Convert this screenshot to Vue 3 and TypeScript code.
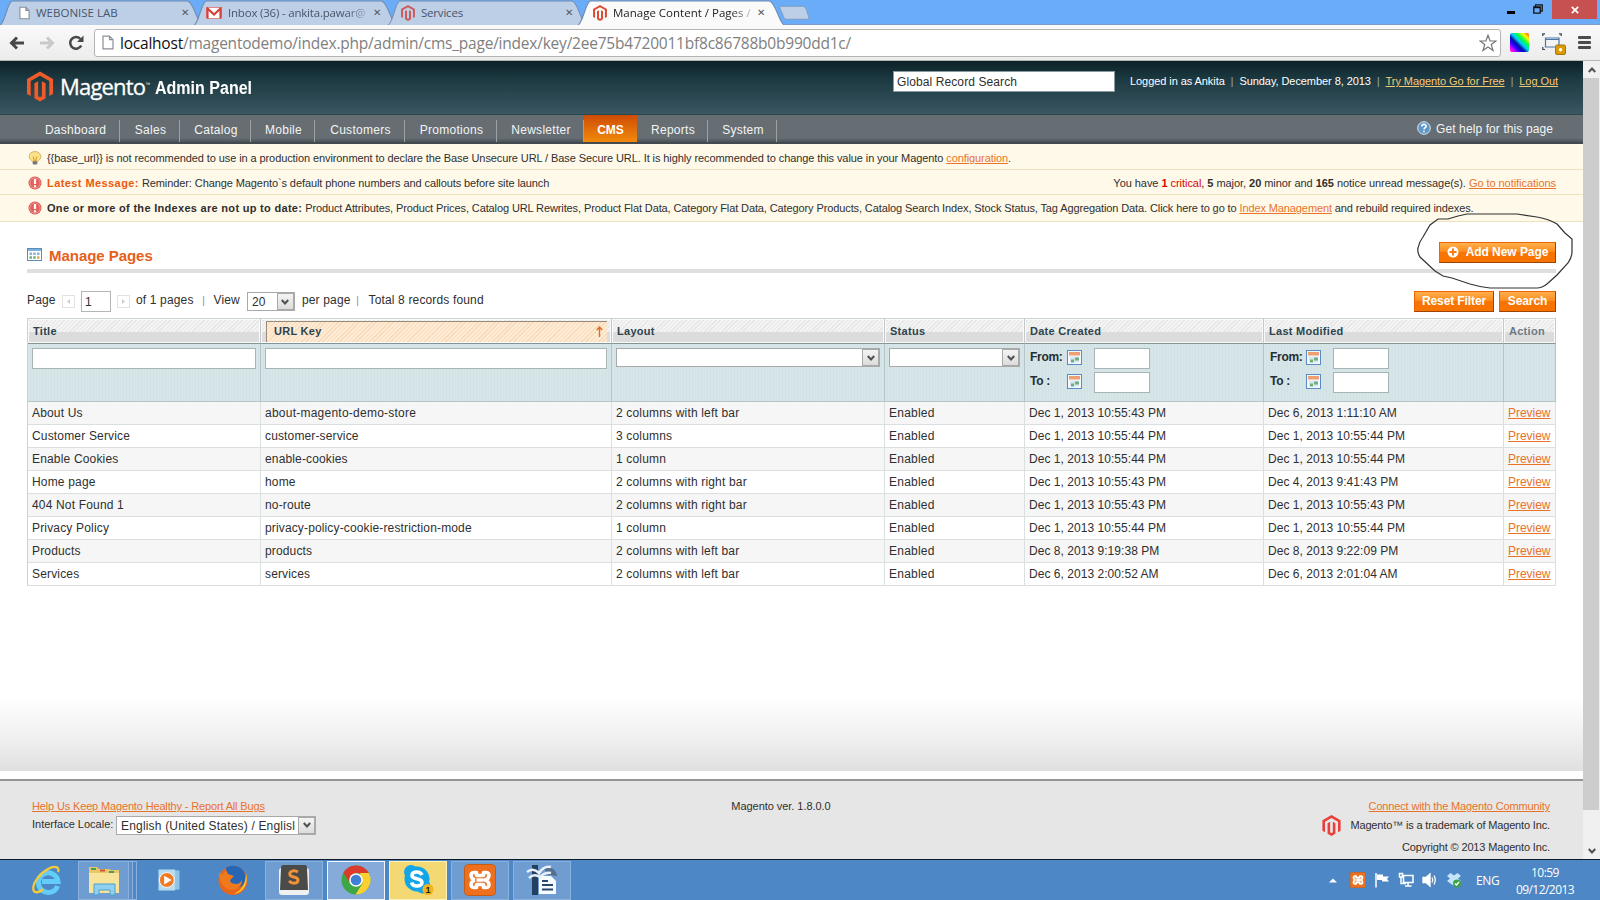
<script setup lang="ts">
interface PageRow {
  title: string
  key: string
  layout: string
  created: string
  modified: string
}

const nav: { label: string; size: string }[] = [
  { label: 'Dashboard', size: 'n90' },
  { label: 'Sales', size: 'n60' },
  { label: 'Catalog', size: 'n71' },
  { label: 'Mobile', size: 'n64' },
  { label: 'Customers', size: 'n90' },
  { label: 'Promotions', size: 'n92' },
  { label: 'Newsletter', size: 'n87' },
  { label: 'CMS', size: 'n53' },
  { label: 'Reports', size: 'n71' },
  { label: 'System', size: 'n69' },
]

const rows: PageRow[] = [
  { title: 'About Us', key: 'about-magento-demo-store', layout: '2 columns with left bar', created: 'Dec 1, 2013 10:55:43 PM', modified: 'Dec 6, 2013 1:11:10 AM' },
  { title: 'Customer Service', key: 'customer-service', layout: '3 columns', created: 'Dec 1, 2013 10:55:44 PM', modified: 'Dec 1, 2013 10:55:44 PM' },
  { title: 'Enable Cookies', key: 'enable-cookies', layout: '1 column', created: 'Dec 1, 2013 10:55:44 PM', modified: 'Dec 1, 2013 10:55:44 PM' },
  { title: 'Home page', key: 'home', layout: '2 columns with right bar', created: 'Dec 1, 2013 10:55:43 PM', modified: 'Dec 4, 2013 9:41:43 PM' },
  { title: '404 Not Found 1', key: 'no-route', layout: '2 columns with right bar', created: 'Dec 1, 2013 10:55:43 PM', modified: 'Dec 1, 2013 10:55:43 PM' },
  { title: 'Privacy Policy', key: 'privacy-policy-cookie-restriction-mode', layout: '1 column', created: 'Dec 1, 2013 10:55:44 PM', modified: 'Dec 1, 2013 10:55:44 PM' },
  { title: 'Products', key: 'products', layout: '2 columns with left bar', created: 'Dec 8, 2013 9:19:38 PM', modified: 'Dec 8, 2013 9:22:09 PM' },
  { title: 'Services', key: 'services', layout: '2 columns with left bar', created: 'Dec 6, 2013 2:00:52 AM', modified: 'Dec 6, 2013 2:01:04 AM' },
]
</script>

<template>
  <div class="screen">
    <div class="tabstrip">
      <div class="tab t1">
        <svg class="tabshape" viewBox="0 0 200 25" preserveAspectRatio="none"><path d="M0 25C5 23 7 3 12 1H186C192 3 195 22 200 25" /></svg>
        <svg class="doc" viewBox="0 0 12 14"><path d="M1 .7h6.500L11 4.200v9.100H1zM7.500.7v3.500H11" /></svg>
        <span class="tabtext">WEBONISE LAB</span><i class="x">✕</i>
      </div>
      <div class="tab t2">
        <svg class="tabshape" viewBox="0 0 200 25" preserveAspectRatio="none"><path d="M0 25C5 23 7 3 12 1H186C192 3 195 22 200 25" /></svg>
        <svg class="mail" viewBox="0 0 16 12"><rect x=".5" y=".5" width="15" height="11" rx="1" /><path d="M1.500 11.500V1.500L8 7.500L14.500 1.500V11.500" /></svg>
        <span class="tabtext fade">Inbox (36) - ankita.pawar@</span><i class="x">✕</i>
      </div>
      <div class="tab t3">
        <svg class="tabshape" viewBox="0 0 200 25" preserveAspectRatio="none"><path d="M0 25C5 23 7 3 12 1H186C192 3 195 22 200 25" /></svg>
        <svg class="mag small pale" viewBox="0 0 26 30"><path d="M13 0L26 7.500V22.500L22.300 24.600V9.600L13 4.300L3.700 9.600V24.600L0 22.500V7.500ZM7.400 11.800L11.100 9.700V24.700L13 25.800L14.900 24.700V9.700L18.600 11.800V26.800L13 30L7.400 26.800Z" /></svg>
        <span class="tabtext">Services</span><i class="x">✕</i>
      </div>
      <div class="tab t4">
        <svg class="tabshape" viewBox="0 0 200 25" preserveAspectRatio="none"><path d="M0 25C5 23 7 3 12 1H186C192 3 195 22 200 25" /></svg>
        <svg class="mag small" viewBox="0 0 26 30"><path d="M13 0L26 7.500V22.500L22.300 24.600V9.600L13 4.300L3.700 9.600V24.600L0 22.500V7.500ZM7.400 11.800L11.100 9.700V24.700L13 25.800L14.900 24.700V9.700L18.600 11.800V26.800L13 30L7.400 26.800Z" /></svg>
        <span class="tabtext fade">Manage Content / Pages /</span><i class="x">✕</i>
      </div>
      <svg class="newtab" viewBox="0 0 32 16"><path d="M2 1H24C27 1 28 3 29 7L31 13C31 14 30 14.500 29 14.500H8C6 14.500 5 13 4 10L1 3C.8 2 1 1 2 1Z" /></svg>
      <div class="winbtns">
        <svg class="min" viewBox="0 0 8 3"><rect width="8" height="3" /></svg>
        <svg class="restore" viewBox="0 0 10 10"><path d="M.8 3h6.400v6.200H.8zM2.500 3V.8h6.700v6.400H7.200M.8 3.500h6.400" /></svg>
        <div class="close"><svg viewBox="0 0 8 8"><path d="M.8.8l6.400 6.400M7.200.8L.8 7.200" /></svg></div>
      </div>
    </div>

    <div class="toolbar">
      <svg class="arrow" viewBox="0 0 16 14"><path d="M15 7H3M8 1.500L2.500 7L8 12.500" /></svg>
      <svg class="arrow off" viewBox="0 0 16 14"><path d="M1 7H13M8 1.500L13.500 7L8 12.500" /></svg>
      <svg class="reload" viewBox="0 0 16 16"><path class="ring" d="M13.200 10.500A5.800 5.800 0 1 1 12.300 4" /><path class="tip" d="M15.500 .5V7H9Z" /></svg>
      <div class="omnibox">
        <svg class="doc" viewBox="0 0 12 14"><path d="M1 .7h6.500L11 4.200v9.100H1zM7.500.7v3.500H11" /></svg>
        <span class="url"><b>localhost</b>/magentodemo/index.php/admin/cms_page/index/key/2ee75b4720011bf8c86788b0b990dd1c/</span>
        <svg class="star" viewBox="0 0 18 18"><path d="M9 1.200L11.100 7H17L12.300 10.500L14 16.500L9 13L4 16.500L5.700 10.500L1 7H6.900Z" /></svg>
      </div>
      <div class="rainbow"></div>
      <svg class="cap" viewBox="0 0 24 22"><path class="frm" d="M3.500 5H17V14H3.500ZM3.500 6.500H17" /><path class="co" d="M.8 3V.8H3M17 .8H19.200V3M.8 14V16.500H3" /><rect class="gold" x="13.500" y="12" width="10" height="9.500" rx="1.500" /><circle cx="18.500" cy="16.700" r="1.700" /></svg>
      <div class="menu"><i></i><i></i><i></i></div>
    </div>

    <div class="viewport">
      <div class="page">
        <header class="head">
          <svg class="mag big" viewBox="0 0 26 30"><path d="M13 0L26 7.500V22.500L22.300 24.600V9.600L13 4.300L3.700 9.600V24.600L0 22.500V7.500ZM7.400 11.800L11.100 9.700V24.700L13 25.800L14.900 24.700V9.700L18.600 11.800V26.800L13 30L7.400 26.800Z" /></svg>
          <span class="brand">Magento</span><sup class="tm">™</sup><span class="panel">Admin Panel</span>
          <div class="gsearch"><span>Global Record Search</span></div>
          <div class="super">
            <span>Logged in as Ankita</span><i>|</i><span>Sunday, December 8, 2013</span><i>|</i><a>Try Magento Go for Free</a><i>|</i><a>Log Out</a>
          </div>
        </header>

        <nav class="nav">
          <div v-for="n in nav" :key="n.label" class="ni" :class="[n.size, { on: n.label === 'CMS' }]"><span>{{ n.label }}</span></div>
          <div class="help">
            <svg viewBox="0 0 14 14"><circle cx="7" cy="7" r="6.300" /><path d="M4.800 5.500C4.800 2.700 9.200 2.800 9.200 5.300C9.200 6.700 7 6.800 7 8.500M7 9.700V11.200" /></svg>
            <span>Get help for this page</span>
          </div>
        </nav>

        <div class="notice a">
          <svg class="bulb" viewBox="0 0 14 15"><path class="gl" d="M7 .6C3.200 .6 .7 3 .7 6C.7 8.300 2.500 9.500 4 11H10C11.500 9.500 13.300 8.300 13.300 6C13.300 3 10.800 .6 7 .6Z" /><path class="fi" d="M5 6L6 9.500V11H8V9.500L9 6" /><rect x="4.500" y="11" width="5" height="3.500" rx="1" /></svg>
          <span class="s1">&#123;&#123;base_url&#125;&#125; is not recommended to use in a production environment to declare the Base Unsecure URL / Base Secure URL. It is highly recommended to change this value in your Magento <a>configuration</a>.</span>
        </div>
        <div class="notice b">
          <svg class="err" viewBox="0 0 14 14"><circle cx="7" cy="7" r="6.500" /><circle class="in" cx="7" cy="7" r="5.200" /><path d="M7 3V8M7 9.300V11.200" /></svg>
          <b class="lm">Latest Message:</b><span class="s2">Reminder: Change Magento`s default phone numbers and callouts before site launch</span>
          <span class="unread">You have <span class="crit"><b>1</b> critical</span>, <b>5</b> major, <b>20</b> minor and <b>165</b> notice unread message(s). <a>Go to notifications</a></span>
        </div>
        <div class="notice c">
          <svg class="err" viewBox="0 0 14 14"><circle cx="7" cy="7" r="6.500" /><circle class="in" cx="7" cy="7" r="5.200" /><path d="M7 3V8M7 9.300V11.200" /></svg>
          <span class="s3"><b>One or more of the Indexes are not up to date:</b> Product Attributes, Product Prices, Catalog URL Rewrites, Product Flat Data, Category Flat Data, Category Products, Catalog Search Index, Stock Status, Tag Aggregation Data. Click here to go to <a>Index Management</a> and rebuild required indexes.</span>
        </div>

        <main class="main">
          <div class="titlebar">
            <svg class="grid" viewBox="0 0 15 13"><rect class="bx" x=".5" y=".5" width="14" height="12" /><rect class="tp" x="1" y="1" width="13" height="2" /><path class="q1" d="M2.500 4.500h2.500v2.500h-2.500zM6.200 4.500h2.500v2.500h-2.500zM10 4.500h2.500v2.500h-2.500z" /><path class="q2" d="M2.500 8.300h2.500v2.500h-2.500zM6.200 8.300h2.500v2.500h-2.500z" /><path class="q3" d="M10 8.300h2.500v2.500h-2.500z" /></svg>
            <h3>Manage Pages</h3>
            <button class="btn add"><svg viewBox="0 0 12 12"><circle cx="6" cy="6" r="5.500" /><path d="M6 2.500V9.500M2.500 6H9.500" /></svg><span>Add New Page</span></button>
          </div>

          <div class="pager">
            <span class="w35">Page</span>
            <svg class="pg" viewBox="0 0 13 13"><rect x=".5" y=".5" width="12" height="12" /><path d="M8 4V9L5 6.500Z" /></svg>
            <div class="num">1</div>
            <svg class="pg" viewBox="0 0 13 13"><rect x=".5" y=".5" width="12" height="12" /><path d="M5 4V9L8 6.500Z" /></svg>
            <span class="of">of 1 pages</span><i>|</i><span class="view">View</span>
            <div class="sel sv"><span>20</span><em><svg viewBox="0 0 8 6"><path d="M.8 1L4 4.500L7.200 1" /></svg></em></div>
            <span class="per">per page</span><i class="last">|</i><span class="tot">Total 8 records found</span>
            <button class="btn reset"><span>Reset Filter</span></button>
            <button class="btn search"><span>Search</span></button>
          </div>

          <table>
            <colgroup><col class="c1" /><col class="c2" /><col class="c3" /><col class="c4" /><col class="c5" /><col class="c6" /><col class="c7" /></colgroup>
            <thead>
              <tr class="hd">
                <th>Title</th>
                <th class="sorted"><div><span>URL Key</span><svg viewBox="0 0 7 11"><path d="M3.500 11V1.500M.8 4L3.500 1L6.200 4" /></svg></div></th>
                <th>Layout</th><th>Status</th><th>Date Created</th><th>Last Modified</th><th class="action">Action</th>
              </tr>
              <tr class="flt">
                <td><div class="inp"></div></td>
                <td><div class="inp"></div></td>
                <td><div class="sel"><span></span><em><svg viewBox="0 0 8 6"><path d="M.8 1L4 4.500L7.200 1" /></svg></em></div></td>
                <td><div class="sel"><span></span><em><svg viewBox="0 0 8 6"><path d="M.8 1L4 4.500L7.200 1" /></svg></em></div></td>
                <td v-for="d in 2" :key="d">
                  <div v-for="l in ['From:', 'To :']" :key="l" class="range" :class="{ second: d === 2 }">
                    <label>{{ l }}</label>
                    <svg class="cal" viewBox="0 0 15 15"><rect class="bx" x=".5" y=".5" width="14" height="14" /><rect class="tp" x="2" y="2" width="11" height="3.500" /><path class="gy" d="M3 6.500h9v6H3z" /><path class="gr" d="M4 9.500h3v3H4zM8 7.500h4v3H8z" /></svg>
                    <div class="inp date"></div>
                  </div>
                </td>
                <td></td>
              </tr>
            </thead>
            <tbody>
              <tr v-for="r in rows" :key="r.title">
                <td>{{ r.title }}</td><td class="key">{{ r.key }}</td><td>{{ r.layout }}</td><td class="key">Enabled</td><td class="dt">{{ r.created }}</td><td class="dt">{{ r.modified }}</td><td class="pv"><a>Preview</a></td>
              </tr>
            </tbody>
          </table>
        </main>

        <footer class="foot">
          <div class="fl">
            <a>Help Us Keep Magento Healthy - Report All Bugs</a>
            <div class="loc"><span>Interface Locale:</span><div class="sel"><span>English (United States) / Englisl</span><em><svg viewBox="0 0 8 6"><path d="M.8 1L4 4.500L7.200 1" /></svg></em></div></div>
          </div>
          <div class="fc">Magento ver. 1.8.0.0</div>
          <div class="fr">
            <a>Connect with the Magento Community</a>
            <div class="tmk"><svg class="mag red" viewBox="0 0 26 30"><path d="M13 0L26 7.500V22.500L22.300 24.600V9.600L13 4.300L3.700 9.600V24.600L0 22.500V7.500ZM7.400 11.800L11.100 9.700V24.700L13 25.800L14.900 24.700V9.700L18.600 11.800V26.800L13 30L7.400 26.800Z" /></svg><span>Magento™ is a trademark of Magento Inc.</span></div>
            <div class="copy">Copyright © 2013 Magento Inc.</div>
          </div>
        </footer>
      </div>
      <div class="scroll">
        <div class="sb"><svg viewBox="0 0 8 6"><path d="M.8 5L4 1.500L7.200 5" /></svg></div>
        <div class="thumb"></div>
        <div class="sb"><svg viewBox="0 0 8 6"><path d="M.8 1L4 4.500L7.200 1" /></svg></div>
      </div>
    </div>

    <svg class="scribble" viewBox="0 0 160 80"><path d="M52 4L102 4L122 7Q134 9 142 14L150 23L157 29V42Q157 47 153 53L142 65L132 74Q127 78 122 78H75Q65 77 55 74L37 68L28 66L20 61L5 47Q2 42 3 38Q4 32 8 27L15 15L23 9H33L43 6Z" /></svg>

    <div class="taskbar">
      <svg class="ic ie" viewBox="0 0 32 32"><path class="e" d="M26.500 22A9.800 9.800 0 1 1 27 17.500H11" /><path class="sw" d="M27 8C29 3 24 1 17 5C8 10 1 20 2.500 26C3.500 30 9 28 12 25.500" /></svg>
      <div class="tb stack"><svg class="ic" viewBox="0 0 32 32"><path class="f1" d="M1 3H9L11 5H21L23 6H31V28H1Z" /><path class="f2" d="M1 9H31V29H1Z" /><path class="f3" d="M3 5h5M21 8h5" /><path class="f5" d="M12 6.500h5" /><path class="f4" d="M6 31V20H27V31H22V26H11V31Z" /></svg></div>
      <svg class="ic wmp" viewBox="0 0 32 32"><path class="p1" d="M9 5H28V27H9Z" /><path class="p2" d="M4 4H23V28H4Z" /><circle cx="13.500" cy="16" r="8.500" /><path class="tri" d="M10.500 11V21L19 16Z" /></svg>
      <svg class="ic ff" viewBox="0 0 32 32"><circle class="o" cx="16" cy="16.500" r="14.500" /><path class="bl" d="M9 4C16-1 28 3 28.500 13C29 21 24 24 19 23C12 22 9 17 9 12Z" /><path class="or" d="M2 8L5 11L9 6L11 10L17 12L14 15C12 17 14 20 19 20C22 20 24 18 25 16C25 23 18 28 11 25C4 22 2 15 2 8Z" /><path class="ye" d="M29 9C32 20 26 29 17 30C25 26 29 19 29 9Z" /></svg>
      <div class="tb sub"><svg class="ic" viewBox="0 0 32 32"><rect class="w" x="1" y="4" width="30" height="27" rx="3" /><path class="k" d="M5 1H27Q29 1 29 4L30 26H2L3 4Q3 1 5 1Z" /><path class="s" d="M20 8C15 5 11 8 12 11C13 14 20 12 20 16C20 20 14 20 11 17" /></svg></div>
      <div class="tb act"><svg class="ic" viewBox="0 0 32 32"><circle class="g" cx="16" cy="16" r="14.500" /><path class="r" d="M3.500 8.700A14.500 14.500 0 0 1 28.700 9H16L10 19Z" /><path class="y" d="M28.700 9A14.500 14.500 0 0 1 15.500 30.500L22.500 19.500L20 9Z" /><circle class="w" cx="16" cy="16" r="6.800" /><circle class="b" cx="16" cy="16" r="5.300" /></svg></div>
      <div class="tb sky"><svg class="ic" viewBox="0 0 32 32"><circle class="cl" cx="15" cy="15" r="12.500" /><circle class="cl" cx="9" cy="8" r="7" /><circle class="cl" cx="21" cy="22" r="7.500" /><path class="s" d="M20 11C18 7 10 7 10 11.500C10 16 20 13.500 20 18.500C20 23 11 23.500 9.500 18.500" /><circle class="n" cx="26" cy="25.500" r="5.500" /><text x="23.500" y="29">1</text></svg></div>
      <div class="tb"><svg class="ic xa" viewBox="0 0 32 32"><rect x=".5" y=".5" width="31" height="31" rx="4" /><path d="M12.500 16H19.500M11 16C6 14.500 6 8.500 9.500 8.500H12.500V11.500H19.500V8.500H22.500C26 8.500 26 14.500 21 16C26 17.500 26 23.500 22.500 23.500H19.500V20.500H12.500V23.500H9.500C6 23.500 6 17.500 11 16" /></svg></div>
      <div class="tb"><svg class="ic wr" viewBox="0 0 32 32"><path class="d" d="M6 1H12V31H6Z" /><path class="dg" d="M17 3C24 2 30 5 31 12L22 11Z" /><path class="pg2" d="M13 12H25L30 17V30H13Z" /><path class="ln" d="M16 17H22M16 21H27M16 25.500H27" /><path class="gu" d="M1 8C6 4 10 6 13 9C17 3 21 2 25 3M3 14C7 10 11 11 14 13C17 10 21 8 25 9" /></svg></div>
      <div class="tray">
        <svg class="up" viewBox="0 0 8 5"><path d="M0 4.500L4 .5L8 4.500Z" /></svg>
        <svg class="xa" viewBox="0 0 32 32"><rect x=".5" y=".5" width="31" height="31" rx="3" /><path d="M12.500 16H19.500M11 16C6 14.500 6 8.500 9.500 8.500H12.500V11.500H19.500V8.500H22.500C26 8.500 26 14.500 21 16C26 17.500 26 23.500 22.500 23.500H19.500V20.500H12.500V23.500H9.500C6 23.500 6 17.500 11 16" /></svg>
        <svg class="flag" viewBox="0 0 16 16"><path class="st" d="M2 1V15.500" /><path d="M3 2.500H9V4.500H15L13 7L15 9.500H8V8H3Z" /></svg>
        <svg class="net" viewBox="0 0 16 16"><path d="M5.500 3.500H15V10.500H5.500ZM10 10.500V13.500M7 14H13.500M1.500 1.500H4.500V5H1.500ZM3 5V11.500H8" /></svg>
        <svg class="vol" viewBox="0 0 16 16"><path class="sp" d="M1 5.500H4L8 2V14L4 10.500H1Z" /><path d="M10 5.500Q11.500 8 10 10.500M12 3.500Q14.500 8 12 12.500" /></svg>
        <svg class="drop" viewBox="0 0 16 16"><path d="M4.500 1L8 3.500L11.500 1L15 4L12 6.500L15 9L11.500 11.500L8 14L4.500 11.500L1 9L4 6.500L1 4Z" /><circle cx="11" cy="11.500" r="4" /><path class="ck" d="M9 11.500L10.500 13L13 10" /></svg>
        <span class="lang">ENG</span>
        <div class="clock"><span>10:59</span><span>09/12/2013</span></div>
      </div>
    </div>
  </div>
</template>

<style>
html,
body {
  margin: 0;
  overflow: hidden;
}
</style>

<style scoped>
* {
  box-sizing: border-box;
}
.screen {
  position: relative;
  width: 1600px;
  height: 900px;
  display: flex;
  flex-direction: column;
  overflow: hidden;
  font-family: 'Liberation Sans', Arial, sans-serif;
  font-size: 12px;
  color: #2f2f2f;
  background: #fff;
  white-space: nowrap;
}
svg {
  display: block;
  flex: none;
}
i {
  font-style: normal;
}
a {
  color: #e8732a;
  text-decoration: underline;
}
/* browser frame */
.tabstrip {
  height: 25px;
  flex: none;
  display: flex;
  background: #6aacf7;
  border-bottom: 1px solid #7d9cc8;
  font-family: 'Open Sans', 'Noto Sans', sans-serif;
}
.tab {
  position: relative;
  height: 25px;
  display: flex;
  align-items: center;
  margin-right: -8px;
  color: #4a5568;
}
.tabshape {
  position: absolute;
  inset: 0;
  width: 100%;
  height: 25px;
  fill: #bccfe6;
  stroke: #7189ad;
  stroke-width: 1;
}
.t1 { width: 202px; padding-left: 19px; }
.t2 { width: 202px; padding-left: 12px; }
.t3 { width: 198px; padding-left: 13px; }
.t4 { width: 206px; padding-left: 15px; color: #222; z-index: 1; }
.t4 .tabshape { fill: #fafafa; }
.tab > svg:not(.tabshape),
.tabtext,
.x { position: relative; }
.tabtext {
  font-size: 11.500px;
  line-height: 20px;
  margin-left: 6px;
  flex: 1;
  overflow: hidden;
}
.t2 .tabtext,
.t3 .tabtext { letter-spacing: -.2px; }
.fade {
  mask-image: linear-gradient(90deg, #000 calc(100% - 26px), transparent);
}
.x {
  font: bold 10px 'DejaVu Sans', sans-serif;
  width: 12px;
  margin-right: 9px;
  color: #55595f;
}
.t2 .x { margin-right: 11px; }
.t4 .x { margin-right: 15px; }
.doc { width: 11px; height: 14px; fill: #fff; stroke: #8a8f98; stroke-width: 1.200; }
.mail { width: 16px; height: 12px; }
.mail rect { fill: #fff; stroke: #d88; }
.mail path { fill: none; stroke: #d8403a; stroke-width: 2.200; }
.mag { fill: #e8532b; }
.small { width: 14px; height: 16px; fill: #dc4a33; }
.pale { fill: #cf5a5a; }
.newtab { width: 31px; height: 16px; margin: 5px 0 0 3px; fill: #bccfe6; stroke: #7f9cc4; }
.winbtns { margin-left: auto; display: flex; }
.min { width: 8px; height: 3px; margin: 11px 18px 0 0; }
.restore { width: 10px; height: 10px; margin: 4px 9px 0 0; fill: none; stroke: #111; stroke-width: 1.300; }
.close { width: 45px; height: 19px; margin-right: 3px; background: #c75050; display: grid; place-items: center; }
.close svg { width: 8px; height: 8px; stroke: #fff; stroke-width: 1.700; }
.toolbar {
  height: 36px;
  flex: none;
  display: flex;
  align-items: center;
  background: linear-gradient(#fafafa, #ececec);
  border-bottom: 1px solid #b5b5b5;
  padding-left: 9px;
}
.arrow { width: 16px; height: 14px; fill: none; stroke: #484848; stroke-width: 3; margin-right: 14px; }
.off { stroke: #c9c9c9; }
.reload { width: 16px; height: 16px; margin: 0 11px 0 -1px; }
.ring { fill: none; stroke: #484848; stroke-width: 2.500; }
.tip { fill: #484848; }
.omnibox {
  width: 1407px;
  height: 28px;
  margin-left: -1px;
  border: 1px solid #b4b4b4;
  border-radius: 3px;
  background: #fff;
  display: flex;
  align-items: center;
  padding: 0 3px 0 7px;
}
.omnibox .doc { height: 15px; width: 12px; }
.url { font: 15.500px 'Open Sans', 'Noto Sans', sans-serif; letter-spacing: -.22px; color: #808080; margin-left: 6px; }
.url b { font-weight: 400; color: #111; }
.star { width: 18px; height: 18px; margin-left: auto; fill: #fff; stroke: #777; stroke-width: 1.200; }
.rainbow { width: 19px; height: 19px; margin-left: 9px; border-radius: 2px; background: linear-gradient(45deg, #ff20a0 0, #f0f 10%, #20f 28%, #00129c 40%, #0cf 52%, #0f4 66%, #ff0 82%, #f40 100%); }
.cap { width: 24px; height: 22px; margin: 2px 0 0 13px; fill: none; }
.frm { stroke: #4a76a8; stroke-width: 1.200; }
.co { stroke: #345; stroke-width: 1.200; }
.gold { fill: #d99b08; stroke: #a87508; }
.cap circle { fill: #fff; }
.menu { margin-left: 12px; display: flex; flex-direction: column; gap: 2px; }
.menu i { width: 13px; height: 3px; border-radius: 1px; background: #4c4c4c; }
/* page */
.viewport { height: 798px; flex: none; display: flex; }
.page { width: 1583px; display: flex; flex-direction: column; }
.scroll { width: 17px; background: #f0f0f0; display: flex; flex-direction: column; }
.sb { height: 17px; display: grid; place-items: center; }
.sb svg, em svg { width: 8px; height: 6px; fill: none; stroke: #505050; stroke-width: 2; }
.thumb { height: 732px; margin: 0 1px auto 0; background: #cdcdcd; }
.head {
  height: 54px;
  flex: none;
  display: flex;
  background: linear-gradient(#0c2127, #1d3a42 35%, #3a5762);
  color: #fff;
  padding-left: 27px;
  border-bottom: 1px solid #28474f;
}
.big { width: 26px; height: 31px; margin-top: 10px; fill: #f15b2a; }
.brand { font: 500 22px 'Open Sans', sans-serif; line-height: 51px; margin-left: 7px; letter-spacing: -.8px; -webkit-text-stroke: .3px #fff; }
.tm { font-size: 5px; line-height: 10px; margin-top: 18px; }
.panel { width: 97px; font: bold 18px 'Liberation Sans', sans-serif; line-height: 54px; margin-left: 5px; transform: scaleX(.89); transform-origin: left; }
.gsearch { width: 222px; height: 21px; margin: 10px 0 0 auto; border: 1px solid #8a9a9e; background: #fff; color: #2f2f2f; padding-left: 3px; line-height: 20px; letter-spacing: .1px; }
.super { width: 428px; margin: 10px 25px 0 15px; font-size: 11px; line-height: 21px; letter-spacing: -.07px; display: flex; justify-content: space-between; }
.super i { color: #a0b0b3; font-size: 10px; }
.super a { color: #f4c974; }
.nav {
  height: 29px;
  flex: none;
  display: flex;
  background: linear-gradient(#666e73 85%, #4a5358);
  border-bottom: 2px solid #434b50;
  padding-left: 30px;
  color: #f4f4f4;
  line-height: 30px;
  letter-spacing: .28px;
}
.ni { text-align: center; padding-left: 1px; overflow: hidden; background: linear-gradient(#9ba1a5, #9ba1a5) right 5px / 1px 100% no-repeat; }
.n53 { width: 53px; } .n60 { width: 60px; } .n64 { width: 64px; } .n69 { width: 69px; } .n71 { width: 71px; }
.n87 { width: 87px; } .n90 { width: 90px; } .n92 { width: 92px; }
.on { background: linear-gradient(#cf4c06, #f18a0c); padding: 0; font-weight: bold; color: #fff; letter-spacing: 0; }
.help { margin: 0 30px 0 auto; display: flex; align-items: center; gap: 5px; letter-spacing: .1px; line-height: 28px; }
.help svg { width: 14px; height: 14px; margin-top: -2px; }
.help circle { fill: #5e97c9; stroke: #dbe8f3; }
.help path { fill: none; stroke: #fff; stroke-width: 1.600; }
.notice {
  flex: none;
  display: flex;
  align-items: center;
  height: 25px;
  background: #fff9e9;
  border-bottom: 1px solid #eee2be;
  font-size: 11px;
  padding: 1px 27px 0 28px;
}
.a { height: 26px; padding-top: 2px; }
.c { height: 27px; padding-bottom: 1px; }
.notice svg { width: 14px; height: 14px; margin-right: 5px; }
.bulb .gl { fill: #fbe28a; stroke: #d0b060; }
.bulb .fi { fill: none; stroke: #d98f10; }
.bulb rect { fill: #777; }
.err circle { fill: #d95050; }
.err .in { fill: #e4605a; stroke: #f3a8a4; stroke-width: .800; }
.err path { stroke: #fff; stroke-width: 2.200; }
.s1, .s2 { letter-spacing: -.09px; }
.s3 { letter-spacing: -.11px; }
.s3 b { letter-spacing: .3px; }
.lm { color: #ea5a10; margin-right: 3px; letter-spacing: .42px; }
.unread { margin-left: auto; letter-spacing: -.05px; }
.crit { color: #d40707; }
.main { flex: 1; padding: 0 27px; background: linear-gradient(#fff 475px, #f0f0f0 515px, #dfdfdf 549px, #fff 549px); }
.titlebar { height: 51px; border-bottom: 4px solid #dfdfdf; display: flex; align-items: center; padding-top: 20px; }
.grid { width: 15px; height: 13px; margin-top: -2px; }
.grid .bx { fill: #fff; stroke: #5b8cb5; }
.tp { fill: #f0a070; }
.grid .tp { fill: #7fb0dc; }
.q1 { fill: #86b3dd; } .q2 { fill: #6fae7a; } .q3 { fill: #e2a94c; }
h3 { margin: 0 0 0 7px; font-size: 15px; line-height: 18px; color: #e5601a; letter-spacing: -.04px; }
.btn {
  height: 21px;
  padding: 0;
  border: 1px solid;
  border-color: #ed6502 #a04300 #a04300 #ed6502;
  background: linear-gradient(#ffb04d, #fd8c1e 45%, #f77400 50%, #f77400);
  color: #fff;
  font: bold 12px 'Liberation Sans', sans-serif;
  letter-spacing: -.1px;
  display: flex;
  align-items: center;
  justify-content: center;
}
.add { width: 117px; margin: -7px 0 0 auto; letter-spacing: -.05px; }
.add svg { width: 12px; height: 12px; margin-right: 7px; }
.add circle { fill: #fff; }
.add path { stroke: #f77f10; stroke-width: 2; }
.pager { height: 45px; padding: 9px 0 0; display: flex; align-items: center; line-height: 18px; letter-spacing: .15px; }
.w35 { width: 35px; }
.pg { width: 13px; height: 13px; margin-top: 3px; fill: #ccc; }
.pg rect { fill: #fff; stroke: #e2e2e2; }
.num { width: 30px; height: 21px; margin: 3px 6px 0; border: 1px solid #b5b5b5; padding-left: 3px; line-height: 20px; }
.pager i { color: #888; font-size: 10px; width: 20px; text-align: center; margin-top: 2px; }
.pager .last { width: 17px; margin-right: 1px; padding-right: 3px; }
.of { margin-left: 6px; }
.sel { height: 19px; border: 1px solid #a9a9a9; background: #fff; display: flex; line-height: 18px; }
.sel span { flex: 1; overflow: hidden; padding-left: 4px; }
.sel em { width: 17px; border: 1px solid #a9a9a9; background: linear-gradient(#f4f4f4, #dcdcdc); display: grid; place-items: center; }
.sv { width: 48px; margin: 3px 7px 0; }
.reset { width: 80px; margin: 2px 5px 0 auto; }
.search { width: 57px; margin-top: 2px; }
table { width: 1529px; table-layout: fixed; border-spacing: 0; border: 1px solid #cbd3d4; border-right: 0; border-bottom: 0; letter-spacing: .17px; }
.c1 { width: 233px; } .c2 { width: 351px; } .c3 { width: 273px; } .c4 { width: 140px; } .c5 { width: 239px; } .c6 { width: 240px; } .c7 { width: 52px; }
th, td { padding: 0 4px; text-align: left; border-right: 1px solid #dadfe0; border-bottom: 1px solid #dadfe0; height: 23px; line-height: 22px; }
th {
  height: 25px;
  padding-left: 5px;
  font-size: 11px;
  letter-spacing: .28px;
  color: #2d444f;
  border-color: #c4c8ca;
  border-bottom-color: #849596;
  box-shadow: inset 0 0 0 1px #fafafa;
  background: linear-gradient(transparent 55%, #dcdcdc 55%), repeating-linear-gradient(135deg, #f3f3f3 0 2px, #e6e6e6 2px 3px);
}
.sorted > div { height: 21px; margin: 1px 0 0; border: 1px solid #9a8a78; border-right: 0; border-bottom: 0; padding: 0 4px 0 7px; display: flex; align-items: center; justify-content: space-between; line-height: 18px; background: repeating-linear-gradient(135deg, #fdebd6 0 2px, #f9dab8 2px 3px); }
.sorted span { margin-top: -2px; }
.sorted svg { width: 7px; height: 11px; margin-top: -2px; fill: none; stroke: #df7020; stroke-width: 1.400; }
.action { color: #6b7a83; }
.key { letter-spacing: .23px; }
tbody td.key:nth-child(2) { letter-spacing: .14px; }
tbody tr:first-child td.key:nth-child(2) { letter-spacing: .24px; }
.dt { letter-spacing: .04px; }
.pv { letter-spacing: -.04px; }
.flt td { height: 58px; vertical-align: top; padding-top: 4px; border-color: #b4c4c7; background: repeating-linear-gradient(90deg, #d6e5e7 0 2px, #d1e1e4 2px 3px); }
.inp { height: 21px; background: #fff; border: 1px solid #a9b4b6; }
.range { display: flex; align-items: center; height: 24px; }
.range .date { width: 56px; margin: 0 0 3px 12px; }
.range label { width: 38px; padding-left: 1px; font-weight: bold; font-size: 12px; line-height: 14px; margin-top: -7px; letter-spacing: -.3px; color: #222f33; }
.second label { padding-left: 2px; }
.cal { width: 15px; height: 15px; margin-top: -5px; }
.cal .bx { fill: #f4f8ff; stroke: #5a8ac8; }
.gy { fill: #dbe6ee; }
.gr { fill: #6fb080; }
tbody tr:nth-child(odd) td { background: #f6f6f6; }
.foot {
  height: 80px;
  flex: none;
  background: #e6e6e6;
  border-top: 2px solid #949494;
  display: grid;
  grid-template-columns: 689px 120px 1fr;
  font-size: 11px;
  line-height: 14px;
  letter-spacing: -.15px;
  padding: 18px 33px 0 32px;
}
.fc { text-align: center; letter-spacing: -.05px; }
.loc { display: flex; align-items: center; height: 20px; margin-top: 2px; }
.loc > span { margin-top: -2px; width: 84px; letter-spacing: 0; }
.loc .sel { width: 200px; font-size: 12px; letter-spacing: .18px; }
.fr { text-align: right; }
.tmk { display: flex; justify-content: flex-end; align-items: center; height: 22px; margin-top: 1px; }
.red { width: 19px; height: 21px; margin-right: 9px; fill: #e8403a; }
.copy { margin-top: 4px; }
.scribble { position: absolute; left: 1415px; top: 210px; width: 160px; height: 80px; fill: none; stroke: #333; stroke-width: 1.200; }
/* taskbar */
.taskbar {
  height: 41px;
  flex: none;
  display: flex;
  align-items: center;
  background: #4d87c5;
  border-top: 1px solid #0d1a28;
  color: #fff;
}
.ic { width: 32px; height: 32px; }
.ie { margin: 0 15px 0 31px; }
.e { fill: none; stroke: #62cdf6; stroke-width: 5; }
.sw { fill: none; stroke: #f5c93c; stroke-width: 2.300; }
.tb { width: 58px; height: 39px; margin-right: 4px; border: 1px solid #8ab0dd; background: #6f9dd2; display: grid; place-items: center; }
.stack { width: 51px; margin-right: 26px; box-shadow: 4px 0 0 -1px #5a8fca, 4px 0 0 0 #8ab0dd, 8px 0 0 -1px #4d87c5, 8px 0 0 0 #8ab0dd; }
.f1 { fill: #e9c766; } .f2 { fill: #f8e39b; } .f3 { fill: none; stroke: #4a9a60; stroke-width: 2; } .f5 { stroke: #d0503c; stroke-width: 2; } .f4 { fill: #8fd0ee; stroke: #4d9fd0; }
.wmp { width: 28px; height: 28px; margin-right: 34px; }
.p1 { fill: #8fc3e8; } .p2 { fill: #b6dcf3; } .wmp circle { fill: #f07b22; stroke: #fff; } .tri { fill: #fff; }
.ff { margin-right: 16px; }
.o { fill: #e8661b; } .bl { fill: #2766b5; } .or { fill: #ef7a1c; } .ye { fill: #fbc52d; }
.sub .w { fill: #f0f0f0; } .k { fill: #4a4a48; } .sub .s { fill: none; stroke: #f0923a; stroke-width: 3; }
.act { background: #86abdb; border: 1px solid #eef6ff; }
.g { fill: #3fa648; } .r { fill: #dc3a2c; } .y { fill: #fbd02f; } .act .w { fill: #fff; } .b.b { fill: #3f7fd6; }
.sky { background: #f4d873; border-color: #fff2b8; }
.cl { fill: #12a5e8; } .sky .s { fill: none; stroke: #fff; stroke-width: 3.600; } .n { fill: #f5b21a; }
.sky text { font: bold 9px 'Liberation Sans', sans-serif; fill: #222; }
.xa rect { fill: #ee6f1e; stroke: #c85a12; } .xa path { fill: none; stroke: #fff; stroke-width: 3.600; stroke-linejoin: round; }
.wr .d { fill: #24405f; } .dg { fill: #52708e; } .pg2 { fill: #f6fbff; } .ln { stroke: #27496b; stroke-width: 2; } .gu { fill: none; stroke: #e8f0f8; stroke-width: 2.500; }
.tray { margin-left: auto; display: flex; align-items: center; font-family: 'Open Sans', 'Noto Sans', sans-serif; font-size: 12px; }
.tray > svg { width: 16px; height: 16px; margin-right: 8px; }
.tray > .up { width: 8px; height: 5px; margin-right: 13px; fill: #fff; }
.flag { fill: #fff; } .st { stroke: #fff; stroke-width: 1.500; }
.net { fill: none; stroke: #fff; stroke-width: 1.500; }
.vol { fill: none; stroke: #fff; stroke-width: 1.300; } .vol .sp { fill: #fff; }
.drop { fill: #c5e4fa; } .drop circle { fill: #3aa24a; } .ck { fill: none; stroke: #fff; stroke-width: 1.500; }
.lang { margin-left: 6px; width: 39px; letter-spacing: -.4px; }
.clock { width: 60px; margin-right: 25px; text-align: center; line-height: 17px; letter-spacing: -.55px; display: flex; flex-direction: column; align-items: center; padding-top: 1px; }
</style>
